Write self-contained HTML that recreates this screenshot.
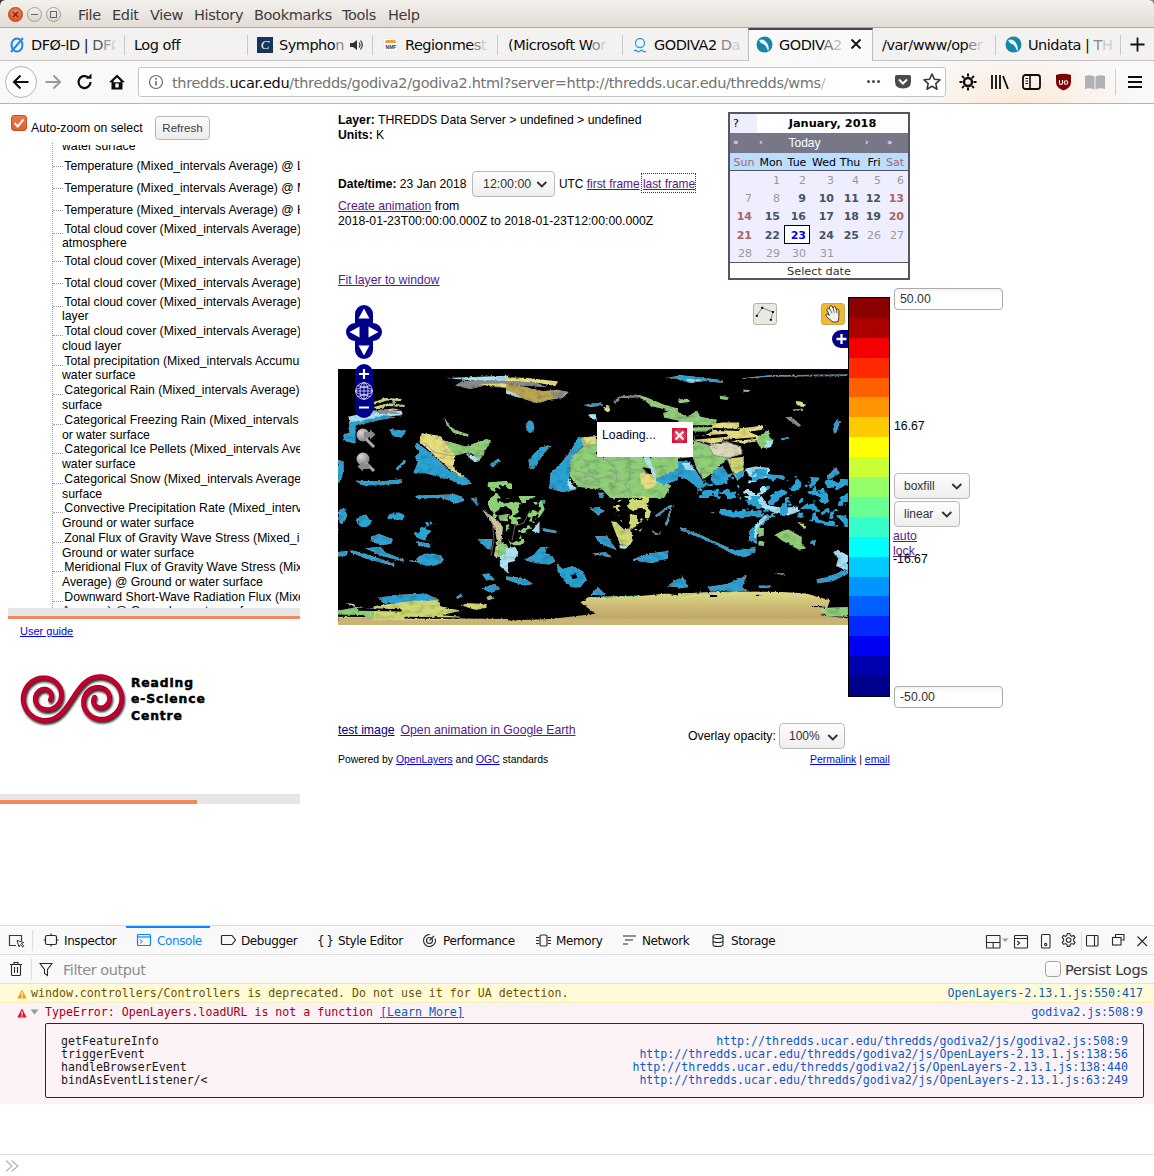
<!DOCTYPE html>
<html><head><meta charset="utf-8"><title>GODIVA2</title>
<style>
*{box-sizing:border-box;margin:0;padding:0}
html,body{width:1154px;height:1176px;overflow:hidden;background:#fff}
body{position:relative;font-family:"Liberation Sans",sans-serif;font-size:12px;color:#000}
.abs{position:absolute}
a{color:#551a8b;text-decoration:underline}
a.b{color:#0000ee}
/* chrome */
#titlebar{left:0;top:0;width:1154px;height:28px;background:linear-gradient(#f3f1ed,#e3dcd5);border-bottom:1px solid #aca69f}
#tabbar{left:0;top:28px;width:1154px;height:33px;background:#f4f2f0}
#navbar{left:0;top:61px;width:1154px;height:43px;background:#f9f9fa;border-bottom:1px solid #b4b4b4}
.ui{font-family:"DejaVu Sans","Liberation Sans",sans-serif}
.menu{top:7px;font-size:14.5px;color:#3c3c3c;letter-spacing:-0.35px;white-space:nowrap}
.tab{top:28px;height:32px;font-size:14.5px;color:#0c0c0d;white-space:nowrap;letter-spacing:-0.5px;line-height:34px;overflow:hidden}
.tsep{top:35px;width:1px;height:20px;background:#c9c9c9}
#urlbar{left:138px;top:67px;width:808px;height:30px;background:#fff;border:1px solid #c4c4c4;border-radius:3px}
/* page */
.t{white-space:nowrap;line-height:14px}
.row{left:62px;width:238px;overflow:hidden;white-space:nowrap;line-height:14px;font-size:12.260px}
select,.sel{font-family:"Liberation Sans",sans-serif}
.sel{border:1px solid #b9b9b9;border-radius:4px;background:linear-gradient(#fdfdfd,#eeeeee);color:#333;font-size:12px;line-height:24px;padding-left:9px;white-space:nowrap}
.inp{border:1px solid #aaa;border-radius:4px;background:linear-gradient(#f4f4f4,#fff 6px);color:#333;font-size:12.300px;line-height:21px;padding-left:5px}
.mono{font-family:"DejaVu Sans Mono","Liberation Mono",monospace;font-size:11.6px;white-space:nowrap;line-height:13px}
</style></head><body>
<div class="abs" id="titlebar"></div>
<div class="abs" style="left:0;top:0;width:5px;height:5px;background:radial-gradient(circle at 100% 100%,rgba(60,59,55,0) 4.300px,#3c3b37 5.200px)"></div>
<div class="abs" style="left:1149px;top:0;width:5px;height:5px;background:radial-gradient(circle at 0 100%,rgba(140,138,134,0) 4.300px,#8c8a86 5.200px)"></div>
<div class="abs" style="left:8px;top:7px;width:15px;height:15px;border-radius:50%;background:radial-gradient(circle at 50% 35%,#f58a66,#e9541f 70%);border:1px solid #b8421a"></div>
<svg class="abs" style="left:8px;top:7px" width="15" height="15"><path d="M5 5l5 5M10 5l-5 5" stroke="#5a2a18" stroke-width="1.3" fill="none"/></svg>
<div class="abs" style="left:27px;top:7px;width:15px;height:15px;border-radius:50%;background:linear-gradient(#f4f2ef,#d9d5cf);border:1px solid #a29c94"></div>
<div class="abs" style="left:31px;top:14px;width:7px;height:1px;background:#666"></div>
<div class="abs" style="left:46px;top:7px;width:15px;height:15px;border-radius:50%;background:linear-gradient(#f4f2ef,#d9d5cf);border:1px solid #a29c94"></div>
<div class="abs" style="left:50px;top:11px;width:7px;height:7px;border:1px solid #666"></div>
<div class="abs ui menu" style="left:78px">File</div>
<div class="abs ui menu" style="left:112px">Edit</div>
<div class="abs ui menu" style="left:150px">View</div>
<div class="abs ui menu" style="left:194px">History</div>
<div class="abs ui menu" style="left:254px">Bookmarks</div>
<div class="abs ui menu" style="left:342px">Tools</div>
<div class="abs ui menu" style="left:388px">Help</div>

<div class="abs" id="tabbar"></div>
<div class="abs" style="left:0;top:60px;width:1154px;height:1px;background:#c2c2c2"></div>
<!-- active tab -->
<div class="abs" style="left:748px;top:28px;width:125px;height:34px;background:#f9f9fa;border-left:1px solid #bdbdbd;border-right:1px solid #bdbdbd;border-top:2px solid #45454a"></div>
<!-- tabs -->
<svg class="abs" style="left:8px;top:36px" width="18" height="18"><ellipse cx="9" cy="9" rx="5.5" ry="6.5" fill="none" stroke="#1e88e5" stroke-width="2"/><path d="M3 16L15 2" stroke="#1e88e5" stroke-width="2"/></svg>
<div class="abs ui tab" style="left:31px;width:84px">DFØ-ID | <span style="color:#555">D</span><span style="color:#999">F</span><span style="color:#d0d0d0">Ø</span></div>
<div class="abs tsep" style="left:124px"></div>
<div class="abs ui tab" style="left:134px;width:90px">Log off</div>
<div class="abs tsep" style="left:247px"></div>
<div class="abs" style="left:257px;top:37px;width:16px;height:16px;background:#15355c;color:#fff;font:italic 13px/16px 'Liberation Serif',serif;text-align:center">C</div>
<div class="abs ui tab" style="left:279px;width:66px">Sympho<span style="color:#888">n</span><span style="color:#ccc">i</span></div>
<svg class="abs" style="left:348px;top:37px" width="16" height="16"><path d="M2 6h3l4-3v10l-4-3H2z" fill="#333"/><path d="M11 5.5q2 2.500 0 5M12.500 3.500q3.500 4.500 0 9" stroke="#333" stroke-width="1.200" fill="none"/></svg>
<div class="abs tsep" style="left:372px"></div>
<div class="abs" style="left:383px;top:38px;width:15px;height:14px;background:#fff;border:1px solid #eee"></div>
<div class="abs" style="left:385px;top:40px;width:11px;height:3px;background:#f0a040;border-radius:2px 2px 0 0"></div>
<div class="abs" style="left:384px;top:44px;width:14px;font:bold 5px/6px 'Liberation Sans',sans-serif;color:#333;text-align:center">NMF</div>
<div class="abs ui tab" style="left:405px;width:84px">Regionme<span style="color:#888">s</span><span style="color:#ccc">t</span></div>
<div class="abs tsep" style="left:497px"></div>
<div class="abs ui tab" style="left:508px;width:106px">(Microsoft W<span style="color:#888">o</span><span style="color:#ccc">r</span></div>
<div class="abs tsep" style="left:622px"></div>
<svg class="abs" style="left:632px;top:36px" width="16" height="18"><circle cx="8" cy="7" r="4.500" fill="none" stroke="#29a3d8" stroke-width="1.300"/><path d="M2 15q1.500-1.500 3 0t3 0 3 0 3 0" fill="none" stroke="#29a3d8" stroke-width="1.200"/></svg>
<div class="abs ui tab" style="left:654px;width:86px">GODIVA2 <span style="color:#888">D</span><span style="color:#ccc">a</span></div>
<svg class="abs" style="left:756px;top:36px" width="17" height="17"><circle cx="8.500" cy="8.500" r="8" fill="#1487a8"/><path d="M3 4q5-2 8 3t1 8q-2-6-5-7t-4-4z" fill="#e8f4f8"/></svg>
<div class="abs ui tab" style="left:779px;width:64px">GODIV<span style="color:#777">A</span><span style="color:#bbb">2</span></div>
<svg class="abs" style="left:850px;top:38px" width="12" height="12"><path d="M1.500 1.500l9 9M10.500 1.500l-9 9" stroke="#111" stroke-width="1.800" fill="none"/></svg>
<div class="abs ui tab" style="left:882px;width:104px">/var/www/op<span style="color:#888">e</span><span style="color:#ccc">r</span></div>
<div class="abs tsep" style="left:995px"></div>
<svg class="abs" style="left:1005px;top:36px" width="17" height="17"><circle cx="8.500" cy="8.500" r="8" fill="#1487a8"/><path d="M3 4q5-2 8 3t1 8q-2-6-5-7t-4-4z" fill="#e8f4f8"/></svg>
<div class="abs ui tab" style="left:1028px;width:84px">Unidata | <span style="color:#888">T</span><span style="color:#ccc">H</span></div>
<div class="abs tsep" style="left:1120px"></div>
<svg class="abs" style="left:1130px;top:37px" width="15" height="15"><path d="M7.500 0.500v14M0.500 7.500h14" stroke="#111" stroke-width="1.800"/></svg>

<div class="abs" id="navbar"></div>
<div class="abs" style="left:880px;top:61px;width:274px;height:42px;background:radial-gradient(ellipse 120px 60px at 140px 44px,rgba(252,228,204,0.75),rgba(252,228,204,0) 100%)"></div>
<div class="abs" style="left:5px;top:66px;width:32px;height:32px;border-radius:50%;background:#fdfdfd;border:1px solid #b6b6b6"></div>
<svg class="abs" style="left:12px;top:73px" width="18" height="18"><path d="M16.500 9H2.500M8.500 2.500L2 9l6.500 6.500" stroke="#0c0c0d" stroke-width="2" fill="none"/></svg>
<svg class="abs" style="left:44px;top:73px" width="18" height="18"><path d="M1.500 9H15.500M9.500 2.500L16 9l-6.500 6.500" stroke="#9a9a9a" stroke-width="2" fill="none"/></svg>
<svg class="abs" style="left:76px;top:73px" width="18" height="18"><path d="M14.500 9a6 6 0 1 1-2.200-4.600" stroke="#0c0c0d" stroke-width="2.200" fill="none"/><path d="M10 5.800h5.500V0.500z" fill="#0c0c0d"/></svg>
<svg class="abs" style="left:108px;top:73px" width="18" height="18"><path d="M9 1.500L1 9.200h2.500V16.500h11V9.200H17z" fill="#0c0c0d"/><rect x="7.300" y="10.500" width="3.400" height="4" fill="#f9f9fa"/><path d="M9 4.500l-3.500 3.500v1.200h7V8z" fill="#f9f9fa"/></svg>
<div class="abs" id="urlbar"></div>
<svg class="abs" style="left:148px;top:74px" width="16" height="16"><circle cx="8" cy="8" r="6.500" fill="none" stroke="#6a6a6a" stroke-width="1.200"/><path d="M8 7v4.500" stroke="#6a6a6a" stroke-width="1.600"/><circle cx="8" cy="4.800" r="1" fill="#6a6a6a"/></svg>
<div class="abs ui" style="left:172px;top:74px;width:690px;height:20px;overflow:hidden;white-space:nowrap;font-size:14.500px;line-height:18px;letter-spacing:-0.33px;color:#737373">thredds.<span style="color:#0c0c0d">ucar.edu</span>/thredds/godiva2/godiva2.html?server=http://thredds.ucar.edu/thredds/wms<span style="color:#bbb">/</span></div>
<div class="abs" style="left:867px;top:80px;width:3px;height:3px;border-radius:50%;background:#4a4a4a;box-shadow:5px 0 #4a4a4a,10px 0 #4a4a4a"></div>
<svg class="abs" style="left:894px;top:74px" width="18" height="16"><path d="M1 2.500q0-1.500 1.500-1.500h13q1.500 0 1.500 1.500v5q0 7-8 7t-8-7z" fill="#4a4a4f"/><path d="M5 5.500l4 4 4-4" stroke="#fff" stroke-width="2" fill="none"/></svg>
<svg class="abs" style="left:922px;top:72px" width="20" height="20"><path d="M10 2l2.400 5.200 5.600.6-4.200 3.800 1.200 5.600L10 14.300 5 17.200l1.200-5.600L2 7.800l5.600-.6z" fill="none" stroke="#3a3a3a" stroke-width="1.600" stroke-linejoin="round"/></svg>
<svg class="abs" style="left:958px;top:72px" width="20" height="20"><circle cx="10" cy="10" r="4" fill="none" stroke="#0c0c0d" stroke-width="2.400"/><path d="M10 1.500v3M10 15.500v3M1.500 10h3M15.500 10h3M4 4l2.100 2.100M13.900 13.900L16 16M4 16l2.100-2.100M13.900 6.100L16 4" stroke="#0c0c0d" stroke-width="2"/></svg>
<svg class="abs" style="left:990px;top:73px" width="20" height="18"><path d="M2 2v14M6 2v14M10 2v14M13 3l5 13" stroke="#0c0c0d" stroke-width="1.800" fill="none"/></svg>
<svg class="abs" style="left:1022px;top:74px" width="19" height="16"><rect x="1" y="1" width="17" height="14" rx="2.500" fill="none" stroke="#0c0c0d" stroke-width="1.800"/><path d="M8 1v14" stroke="#0c0c0d" stroke-width="1.600"/><path d="M3.500 4.500h2.500M3.500 7h2.500M3.500 9.500h2.500" stroke="#0c0c0d" stroke-width="1"/></svg>
<svg class="abs" style="left:1055px;top:73px" width="17" height="18"><path d="M1 2q7.500-2.500 15 0v7q0 6-7.500 8.500Q1 15 1 9z" fill="#800000"/><path d="M4.500 7v3q0 1.500 1.500 1.500t1.500-1.500V7" stroke="#fff" stroke-width="1.100" fill="none"/><circle cx="11" cy="9.500" r="1.800" stroke="#fff" stroke-width="1.100" fill="none"/></svg>
<svg class="abs" style="left:1084px;top:74px" width="22" height="17"><path d="M1 2q5-1.500 9.500.5v13q-4.500-2-9.500-.5zM21 2q-5-1.500-9.500.5v13q4.500-2 9.500-.5z" fill="#b1b1b3"/></svg>
<div class="abs" style="left:1115px;top:69px;width:1px;height:26px;background:#d0d0d0"></div>
<svg class="abs" style="left:1127px;top:74px" width="16" height="16"><path d="M1 3h14M1 8h14M1 13h14" stroke="#0c0c0d" stroke-width="2"/></svg>
<div class="abs" style="left:11px;top:115px;width:16px;height:16px;border-radius:3px;background:linear-gradient(#f07746,#e3602b);border:1px solid #c9501f"></div>
<svg class="abs" style="left:11px;top:115px" width="16" height="16"><path d="M3.500 8l3.200 3.400 5.800-7" stroke="#fff" stroke-width="2" fill="none"/></svg>
<div class="abs t" style="left:31px;top:121px;font-size:12.250px">Auto-zoom on select</div>
<div class="abs" style="left:155px;top:116px;width:55px;height:24px;border:1px solid #b5b5b5;border-radius:4px;background:linear-gradient(#fcfcfc,#ececec);font-size:11.500px;color:#3c3c3c;text-align:center;line-height:22px">Refresh</div>
<!-- tree -->
<div class="abs" style="left:8px;top:143px;width:292px;height:465px;overflow:hidden">
 <div class="abs" style="left:44px;top:0;width:0;height:465px;border-left:1px dotted #999"></div>
</div>
<div class="abs" id="tree" style="left:0;top:143px;width:300px;height:465px;overflow:hidden;clip-path:inset(2px 0 0 0)">
<div class="abs row" style="top:-4px">water surface</div>
<div class="abs row" style="top:16px;text-indent:2.300px">Temperature (Mixed_intervals Average) @ Low cloud layer</div>
<div class="abs" style="left:53px;top:23px;width:10px;height:0;border-top:1px dotted #999"></div>
<div class="abs row" style="top:38px;text-indent:2.300px">Temperature (Mixed_intervals Average) @ Middle cloud layer</div>
<div class="abs" style="left:53px;top:45px;width:10px;height:0;border-top:1px dotted #999"></div>
<div class="abs row" style="top:60px;text-indent:2.300px">Temperature (Mixed_intervals Average) @ High cloud layer</div>
<div class="abs" style="left:53px;top:67px;width:10px;height:0;border-top:1px dotted #999"></div>
<div class="abs row" style="top:79px;text-indent:2.300px">Total cloud cover (Mixed_intervals Average) @ Entire</div>
<div class="abs" style="left:53px;top:90px;width:10px;height:0;border-top:1px dotted #999"></div>
<div class="abs row" style="top:93px;background:#fff">atmosphere</div>
<div class="abs row" style="top:111px;text-indent:2.300px">Total cloud cover (Mixed_intervals Average) @ Low cloud layer</div>
<div class="abs" style="left:53px;top:118px;width:10px;height:0;border-top:1px dotted #999"></div>
<div class="abs row" style="top:133px;text-indent:2.300px">Total cloud cover (Mixed_intervals Average) @ Middle cloud layer</div>
<div class="abs" style="left:53px;top:140px;width:10px;height:0;border-top:1px dotted #999"></div>
<div class="abs row" style="top:152px;text-indent:2.300px">Total cloud cover (Mixed_intervals Average) @ High cloud</div>
<div class="abs" style="left:53px;top:163px;width:10px;height:0;border-top:1px dotted #999"></div>
<div class="abs row" style="top:166px;background:#fff">layer</div>
<div class="abs row" style="top:181px;text-indent:2.300px">Total cloud cover (Mixed_intervals Average) @ Convective</div>
<div class="abs" style="left:53px;top:192px;width:10px;height:0;border-top:1px dotted #999"></div>
<div class="abs row" style="top:196px;background:#fff">cloud layer</div>
<div class="abs row" style="top:211px;text-indent:2.300px">Total precipitation (Mixed_intervals Accumulation) @ Ground or</div>
<div class="abs" style="left:53px;top:222px;width:10px;height:0;border-top:1px dotted #999"></div>
<div class="abs row" style="top:225px;background:#fff">water surface</div>
<div class="abs row" style="top:240px;text-indent:2.300px">Categorical Rain (Mixed_intervals Average) @ Ground or water</div>
<div class="abs" style="left:53px;top:251px;width:10px;height:0;border-top:1px dotted #999"></div>
<div class="abs row" style="top:255px;background:#fff">surface</div>
<div class="abs row" style="top:270px;text-indent:2.300px">Categorical Freezing Rain (Mixed_intervals Average) @ Ground</div>
<div class="abs" style="left:53px;top:281px;width:10px;height:0;border-top:1px dotted #999"></div>
<div class="abs row" style="top:285px;background:#fff">or water surface</div>
<div class="abs row" style="top:299px;text-indent:2.300px">Categorical Ice Pellets (Mixed_intervals Average) @ Ground or</div>
<div class="abs" style="left:53px;top:310px;width:10px;height:0;border-top:1px dotted #999"></div>
<div class="abs row" style="top:314px;background:#fff">water surface</div>
<div class="abs row" style="top:329px;text-indent:2.300px">Categorical Snow (Mixed_intervals Average) @ Ground or water</div>
<div class="abs" style="left:53px;top:340px;width:10px;height:0;border-top:1px dotted #999"></div>
<div class="abs row" style="top:344px;background:#fff">surface</div>
<div class="abs row" style="top:358px;text-indent:2.300px">Convective Precipitation Rate (Mixed_intervals Average) @</div>
<div class="abs" style="left:53px;top:369px;width:10px;height:0;border-top:1px dotted #999"></div>
<div class="abs row" style="top:373px;background:#fff">Ground or water surface</div>
<div class="abs row" style="top:388px;text-indent:2.300px">Zonal Flux of Gravity Wave Stress (Mixed_intervals Average) @</div>
<div class="abs" style="left:53px;top:399px;width:10px;height:0;border-top:1px dotted #999"></div>
<div class="abs row" style="top:403px;background:#fff">Ground or water surface</div>
<div class="abs row" style="top:417px;text-indent:2.300px">Meridional Flux of Gravity Wave Stress (Mixed_intervals</div>
<div class="abs" style="left:53px;top:428px;width:10px;height:0;border-top:1px dotted #999"></div>
<div class="abs row" style="top:432px;background:#fff">Average) @ Ground or water surface</div>
<div class="abs row" style="top:447px;text-indent:2.300px">Downward Short-Wave Radiation Flux (Mixed_intervals</div>
<div class="abs" style="left:53px;top:458px;width:10px;height:0;border-top:1px dotted #999"></div>
<div class="abs row" style="top:461px;background:#fff">Average) @ Ground or water surface</div>
</div>
<div class="abs" style="left:8px;top:608px;width:292px;height:8px;background:#e6e6e6"></div>
<div class="abs" style="left:8px;top:615.500px;width:292px;height:3.300px;background:#f08a5d"></div>
<a class="abs t b" style="left:20px;top:624px;font-size:11px">User guide</a>
<!-- logo -->
<svg class="abs" style="left:14px;top:666px" width="120" height="66" viewBox="14 666 120 66">
<defs><filter id="sh" x="-10%" y="-10%" width="130%" height="130%"><feGaussianBlur in="SourceAlpha" stdDeviation="0.9"/><feOffset dx="1.3" dy="1.6"/><feComponentTransfer><feFuncA type="linear" slope="0.85"/></feComponentTransfer><feMerge><feMergeNode/><feMergeNode in="SourceGraphic"/></feMerge></filter></defs>
<g filter="url(#sh)" fill="none" stroke-linecap="round" stroke-linejoin="round"><path d="M50.3 699.8 L50.6 699.4 L50.8 699.0 L51.0 698.5 L51.2 698.0 L51.4 697.5 L51.5 696.9 L51.5 696.3 L51.5 695.7 L51.5 695.0 L51.4 694.4 L51.1 693.8 L50.9 693.1 L50.5 692.5 L50.1 691.9 L49.6 691.4 L49.1 690.8 L48.5 690.4 L47.8 690.0 L47.1 689.6 L46.3 689.4 L45.5 689.2 L44.7 689.1 L43.9 689.2 L43.0 689.3 L42.2 689.5 L41.4 689.7 L40.6 690.1 L39.9 690.5 L39.2 691.0 L38.6 691.6 L37.9 692.2 L37.4 692.8 L36.9 693.5 L36.4 694.3 L36.1 695.1 L35.8 695.9 L35.5 696.7 L35.4 697.6 L35.3 698.5 L35.3 699.4 L35.4 700.3 L35.5 701.2 L35.8 702.0 L36.1 702.9 L36.5 703.7 L36.9 704.5 L37.4 705.3 L38.0 706.0 L38.7 706.6 L39.4 707.2 L40.2 707.7 L41.0 708.2 L41.8 708.6 L42.7 708.9 L43.6 709.2 L44.5 709.4 L45.5 709.6 L46.5 709.7 L47.5 709.7 L48.5 709.7 L49.5 709.5 L50.5 709.3 L51.6 709.0 L52.6 708.6 L53.6 708.2 L54.6 707.6 L55.5 706.9 L56.5 706.2 L57.3 705.3 L58.1 704.4 L58.9 703.4 L59.6 702.3 L60.1 701.1 L60.6 699.8 L61.0 698.5 L61.3 697.1 L61.4 695.7 L61.4 694.2 L61.3 692.7 L61.1 691.2 L60.7 689.7 L60.1 688.3 L59.4 686.8 L58.5 685.5 L57.5 684.1 L56.4 682.9 L55.1 681.8 L53.8 680.8 L52.3 679.9 L50.7 679.2 L49.0 678.6 L47.3 678.2 L45.5 677.9 L43.7 677.8 L41.9 677.9 L40.0 678.1 L38.2 678.5 L36.5 679.1 L34.8 679.9 L33.1 680.8 L31.6 681.9 L30.1 683.1 L28.8 684.4 L27.5 685.9 L26.4 687.5 L25.5 689.2 L24.7 690.9 L24.1 692.8 L23.6 694.6 L23.3 696.6 L23.2 698.5 L23.3 700.4 L23.5 702.4 L24.0 704.3 L24.6 706.1 L25.4 707.9 L26.3 709.6 L27.3 711.2 L28.5 712.7 L29.9 714.1 L31.3 715.4 L32.9 716.6 L34.5 717.6 L36.2 718.4 L38.0 719.1 L39.8 719.7 L41.7 720.1 L43.6 720.3 L45.5 720.4 C71.5 720.4 73.5 676.6 99.5 676.6 L101.4 676.7 L103.3 676.9 L105.2 677.3 L107.0 677.9 L108.8 678.6 L110.5 679.4 L112.1 680.4 L113.7 681.6 L115.1 682.9 L116.5 684.3 L117.7 685.8 L118.7 687.4 L119.6 689.1 L120.4 690.9 L121.0 692.7 L121.5 694.6 L121.7 696.6 L121.8 698.5 L121.7 700.4 L121.4 702.4 L120.9 704.2 L120.3 706.1 L119.5 707.8 L118.6 709.5 L117.5 711.1 L116.2 712.6 L114.9 713.9 L113.4 715.1 L111.9 716.2 L110.2 717.1 L108.5 717.9 L106.8 718.5 L105.0 718.9 L103.1 719.1 L101.3 719.2 L99.5 719.1 L97.7 718.8 L96.0 718.4 L94.3 717.8 L92.7 717.1 L91.2 716.2 L89.9 715.2 L88.6 714.1 L87.5 712.9 L86.5 711.5 L85.6 710.2 L84.9 708.7 L84.3 707.3 L83.9 705.8 L83.7 704.3 L83.6 702.8 L83.6 701.3 L83.7 699.9 L84.0 698.5 L84.4 697.2 L84.9 695.9 L85.4 694.7 L86.1 693.6 L86.9 692.6 L87.7 691.7 L88.5 690.8 L89.5 690.1 L90.4 689.4 L91.4 688.8 L92.4 688.4 L93.4 688.0 L94.5 687.7 L95.5 687.5 L96.5 687.3 L97.5 687.3 L98.5 687.3 L99.5 687.4 L100.5 687.6 L101.4 687.8 L102.3 688.1 L103.2 688.4 L104.0 688.8 L104.8 689.3 L105.6 689.8 L106.3 690.4 L107.0 691.0 L107.6 691.7 L108.1 692.5 L108.5 693.3 L108.9 694.1 L109.2 695.0 L109.5 695.8 L109.6 696.7 L109.7 697.6 L109.7 698.5 L109.6 699.4 L109.5 700.3 L109.2 701.1 L108.9 701.9 L108.6 702.7 L108.1 703.5 L107.6 704.2 L107.1 704.8 L106.4 705.4 L105.8 706.0 L105.1 706.5 L104.4 706.9 L103.6 707.3 L102.8 707.5 L102.0 707.7 L101.1 707.8 L100.3 707.9 L99.5 707.8 L98.7 707.6 L97.9 707.4 L97.2 707.0 L96.5 706.6 L95.9 706.2 L95.4 705.6 L94.9 705.1 L94.5 704.5 L94.1 703.9 L93.9 703.2 L93.6 702.6 L93.5 702.0 L93.5 701.3 L93.5 700.7 L93.5 700.1 L93.6 699.5 L93.8 699.0 L94.0 698.5 L94.2 698.0 L94.4 697.6 L94.7 697.2" stroke="#a00026" stroke-width="4.8"/><path d="M50.3 699.8 L50.6 699.4 L50.8 699.0 L51.0 698.5 L51.2 698.0 L51.4 697.5 L51.5 696.9 L51.5 696.3 L51.5 695.7 L51.5 695.0 L51.4 694.4 L51.1 693.8 L50.9 693.1 L50.5 692.5 L50.1 691.9 L49.6 691.4 L49.1 690.8 L48.5 690.4 L47.8 690.0 L47.1 689.6 L46.3 689.4 L45.5 689.2 L44.7 689.1 L43.9 689.2 L43.0 689.3 L42.2 689.5 L41.4 689.7 L40.6 690.1 L39.9 690.5 L39.2 691.0 L38.6 691.6 L37.9 692.2 L37.4 692.8 L36.9 693.5 L36.4 694.3 L36.1 695.1 L35.8 695.9 L35.5 696.7 L35.4 697.6 L35.3 698.5 L35.3 699.4 L35.4 700.3 L35.5 701.2 L35.8 702.0 L36.1 702.9 L36.5 703.7 L36.9 704.5 L37.4 705.3 L38.0 706.0 L38.7 706.6 L39.4 707.2 L40.2 707.7 L41.0 708.2 L41.8 708.6 L42.7 708.9 L43.6 709.2 L44.5 709.4 L45.5 709.6 L46.5 709.7 L47.5 709.7 L48.5 709.7 L49.5 709.5 L50.5 709.3 L51.6 709.0 L52.6 708.6 L53.6 708.2 L54.6 707.6 L55.5 706.9 L56.5 706.2 L57.3 705.3 L58.1 704.4 L58.9 703.4 L59.6 702.3 L60.1 701.1 L60.6 699.8 L61.0 698.5 L61.3 697.1 L61.4 695.7 L61.4 694.2 L61.3 692.7 L61.1 691.2 L60.7 689.7 L60.1 688.3 L59.4 686.8 L58.5 685.5 L57.5 684.1 L56.4 682.9 L55.1 681.8 L53.8 680.8 L52.3 679.9 L50.7 679.2 L49.0 678.6 L47.3 678.2 L45.5 677.9 L43.7 677.8 L41.9 677.9 L40.0 678.1 L38.2 678.5 L36.5 679.1 L34.8 679.9 L33.1 680.8 L31.6 681.9 L30.1 683.1 L28.8 684.4 L27.5 685.9 L26.4 687.5 L25.5 689.2 L24.7 690.9 L24.1 692.8 L23.6 694.6 L23.3 696.6 L23.2 698.5 L23.3 700.4 L23.5 702.4 L24.0 704.3 L24.6 706.1 L25.4 707.9 L26.3 709.6 L27.3 711.2 L28.5 712.7 L29.9 714.1 L31.3 715.4 L32.9 716.6 L34.5 717.6 L36.2 718.4 L38.0 719.1 L39.8 719.7 L41.7 720.1 L43.6 720.3 L45.5 720.4 C71.5 720.4 73.5 676.6 99.5 676.6 L101.4 676.7 L103.3 676.9 L105.2 677.3 L107.0 677.9 L108.8 678.6 L110.5 679.4 L112.1 680.4 L113.7 681.6 L115.1 682.9 L116.5 684.3 L117.7 685.8 L118.7 687.4 L119.6 689.1 L120.4 690.9 L121.0 692.7 L121.5 694.6 L121.7 696.6 L121.8 698.5 L121.7 700.4 L121.4 702.4 L120.9 704.2 L120.3 706.1 L119.5 707.8 L118.6 709.5 L117.5 711.1 L116.2 712.6 L114.9 713.9 L113.4 715.1 L111.9 716.2 L110.2 717.1 L108.5 717.9 L106.8 718.5 L105.0 718.9 L103.1 719.1 L101.3 719.2 L99.5 719.1 L97.7 718.8 L96.0 718.4 L94.3 717.8 L92.7 717.1 L91.2 716.2 L89.9 715.2 L88.6 714.1 L87.5 712.9 L86.5 711.5 L85.6 710.2 L84.9 708.7 L84.3 707.3 L83.9 705.8 L83.7 704.3 L83.6 702.8 L83.6 701.3 L83.7 699.9 L84.0 698.5 L84.4 697.2 L84.9 695.9 L85.4 694.7 L86.1 693.6 L86.9 692.6 L87.7 691.7 L88.5 690.8 L89.5 690.1 L90.4 689.4 L91.4 688.8 L92.4 688.4 L93.4 688.0 L94.5 687.7 L95.5 687.5 L96.5 687.3 L97.5 687.3 L98.5 687.3 L99.5 687.4 L100.5 687.6 L101.4 687.8 L102.3 688.1 L103.2 688.4 L104.0 688.8 L104.8 689.3 L105.6 689.8 L106.3 690.4 L107.0 691.0 L107.6 691.7 L108.1 692.5 L108.5 693.3 L108.9 694.1 L109.2 695.0 L109.5 695.8 L109.6 696.7 L109.7 697.6 L109.7 698.5 L109.6 699.4 L109.5 700.3 L109.2 701.1 L108.9 701.9 L108.6 702.7 L108.1 703.5 L107.6 704.2 L107.1 704.8 L106.4 705.4 L105.8 706.0 L105.1 706.5 L104.4 706.9 L103.6 707.3 L102.8 707.5 L102.0 707.7 L101.1 707.8 L100.3 707.9 L99.5 707.8 L98.7 707.6 L97.9 707.4 L97.2 707.0 L96.5 706.6 L95.9 706.2 L95.4 705.6 L94.9 705.1 L94.5 704.5 L94.1 703.9 L93.9 703.2 L93.6 702.6 L93.5 702.0 L93.5 701.3 L93.5 700.7 L93.5 700.1 L93.6 699.5 L93.8 699.0 L94.0 698.5 L94.2 698.0 L94.4 697.6 L94.7 697.2" stroke="#c4002f" stroke-width="3.2"/></g></svg>
<div class="abs t" style="left:131px;top:675px;font-family:'DejaVu Sans',sans-serif;font-size:12.300px;font-weight:bold;line-height:16.400px;letter-spacing:0.900px;-webkit-text-stroke:0.500px #000">Reading<br>e-Science<br>Centre</div>
<div class="abs" style="left:0;top:794px;width:300px;height:10px;background:#e6e6e6"></div>
<div class="abs" style="left:0;top:800.300px;width:197px;height:3.500px;background:#f08a5d"></div>
<div class="abs t" style="left:338px;top:113px;font-size:12.250px;line-height:15px"><b>Layer:</b> THREDDS Data Server &gt; undefined &gt; undefined<br><b>Units:</b> K</div>
<div class="abs t" style="left:338px;top:177px;font-size:12.100px"><b>Date/time:</b> 23 Jan 2018</div>
<div class="abs sel" style="left:472px;top:171px;width:83px;height:25.500px;font-size:12.400px;padding-left:10px">12:00:00</div>
<svg class="abs" style="left:536px;top:180px" width="12" height="9"><path d="M1.300 2l4.500 4.500L10.300 2" stroke="#333" stroke-width="1.900" fill="none"/></svg>
<div class="abs t" style="left:559px;top:177px;font-size:11.900px">UTC <a>first frame</a> <a>last frame</a></div>
<div class="abs t" style="left:338px;top:199px;font-size:12.250px;line-height:15px"><a>Create animation</a> from<br>2018-01-23T00:00:00.000Z to 2018-01-23T12:00:00.000Z</div>
<div class="abs" style="left:641px;top:173px;width:55px;height:20px;border:1px dotted #551a8b"></div>
<a class="abs t" style="left:338px;top:273px;font-size:12.250px">Fit layer to window</a>
<!-- bottom -->
<div class="abs t" style="left:338px;top:723px;font-size:12.250px"><a style="color:#00008b">test image</a><span style="display:inline-block;width:6px"></span><a>Open animation in Google Earth</a></div>
<div class="abs t" style="left:688px;top:729px;font-size:12.250px">Overlay opacity:</div>
<div class="abs sel" style="left:779px;top:723px;width:66px;height:25.500px">100%</div>
<svg class="abs" style="left:827px;top:733px" width="12" height="9"><path d="M1.300 2l4.500 4.500L10.300 2" stroke="#333" stroke-width="1.900" fill="none"/></svg>
<div class="abs t" style="left:338px;top:753px;font-size:10.430px">Powered by <a class="b">OpenLayers</a> and <a class="b">OGC</a> standards</div>
<div class="abs t" style="left:810px;top:753px;font-size:10.430px"><a class="b">Permalink</a> | <a class="b">email</a></div>
<!-- scale controls -->
<div class="abs inp" style="left:894px;top:288px;width:109px;height:22px">50.00</div>
<div class="abs t" style="left:894px;top:419px;font-size:12.250px">16.67</div>
<div class="abs sel" style="left:894px;top:473px;width:76px;height:26px">boxfill</div>
<svg class="abs" style="left:951px;top:482px" width="12" height="9"><path d="M1.300 2l4.500 4.500L10.300 2" stroke="#333" stroke-width="1.900" fill="none"/></svg>
<div class="abs sel" style="left:894px;top:501px;width:66px;height:26px">linear</div>
<svg class="abs" style="left:941px;top:510px" width="12" height="9"><path d="M1.300 2l4.500 4.500L10.300 2" stroke="#333" stroke-width="1.900" fill="none"/></svg>
<div class="abs t" style="left:893px;top:529px;font-size:12.250px;line-height:14.500px"><a>auto</a><br><a>lock</a></div>
<div class="abs t" style="left:893px;top:552px;font-size:12.250px">-16.67</div>
<div class="abs inp" style="left:894px;top:686px;width:109px;height:22px">-50.00</div>
<div class="abs" id="cal" style="left:728px;top:112px;width:182px;height:168px;border:2px solid #556;background:#eef;font-family:'DejaVu Sans',sans-serif;font-size:11px;color:#000">
<style>
#cal div{position:absolute;white-space:nowrap}
#cal .d{width:25px;text-align:right;height:18px;line-height:18px;color:#999;font-size:11px}
#cal .bd{font-weight:bold;color:#456}
#cal .we{color:#a66}
#cal .dn{top:40px;height:17px;line-height:18px;text-align:center;font-size:11px}
</style>
<div style="left:0;top:0;width:178px;height:19px;background:#fff"></div>
<div style="left:0;top:0;width:27px;height:19px;background:#eef;line-height:19px;padding-left:3px;font-size:11px">?</div>
<div style="left:27px;top:0;width:151px;height:19px;line-height:19px;text-align:center;font-weight:bold;font-size:11.35px">January, 2018</div>
<div style="left:0;top:19px;width:178px;height:20px;background:#778"></div>
<div style="left:3px;top:19px;color:#fff;font-size:9px;line-height:19px">«</div>
<div style="left:29px;top:19px;color:#fff;font-size:9px;line-height:19px">‹</div>
<div style="left:27px;top:19px;width:95px;text-align:center;color:#fff;font:12px/21px 'Liberation Sans',sans-serif">Today</div>
<div style="left:135px;top:19px;color:#fff;font-size:9px;line-height:19px">›</div>
<div style="left:157px;top:19px;color:#fff;font-size:9px;line-height:19px">»</div>
<div style="left:0;top:39px;width:178px;height:18px;background:#bdf;border-bottom:1px solid #556"></div>
<div class="dn we" style="left:0;width:28px">Sun</div>
<div class="dn" style="left:27px;width:28px">Mon</div>
<div class="dn" style="left:54px;width:26px">Tue</div>
<div class="dn" style="left:80px;width:28px">Wed</div>
<div class="dn" style="left:107px;width:26px">Thu</div>
<div class="dn" style="left:133px;width:22px">Fri</div>
<div class="dn we" style="left:153px;width:24px">Sat</div>
<div class="d" style="left:25px;top:58px">1</div>
<div class="d" style="left:51px;top:58px">2</div>
<div class="d" style="left:79px;top:58px">3</div>
<div class="d" style="left:104px;top:58px">4</div>
<div class="d" style="left:126px;top:58px">5</div>
<div class="d" style="left:149px;top:58px">6</div>
<div class="d" style="left:-3px;top:76px">7</div>
<div class="d" style="left:25px;top:76px">8</div>
<div class="d bd" style="left:51px;top:76px">9</div>
<div class="d bd" style="left:79px;top:76px">10</div>
<div class="d bd" style="left:104px;top:76px">11</div>
<div class="d bd" style="left:126px;top:76px">12</div>
<div class="d bd we" style="left:149px;top:76px">13</div>
<div class="d bd we" style="left:-3px;top:94px">14</div>
<div class="d bd" style="left:25px;top:94px">15</div>
<div class="d bd" style="left:51px;top:94px">16</div>
<div class="d bd" style="left:79px;top:94px">17</div>
<div class="d bd" style="left:104px;top:94px">18</div>
<div class="d bd" style="left:126px;top:94px">19</div>
<div class="d bd we" style="left:149px;top:94px">20</div>
<div class="d bd we" style="left:-3px;top:113px">21</div>
<div class="d bd" style="left:25px;top:113px">22</div>
<div style="left:54px;top:111px;width:26px;height:19px;background:#fff;border:1px solid #000"></div>
<div class="d bd" style="left:51px;top:113px;color:#00f">23</div>
<div class="d bd" style="left:79px;top:113px">24</div>
<div class="d bd" style="left:104px;top:113px">25</div>
<div class="d" style="left:126px;top:113px">26</div>
<div class="d" style="left:149px;top:113px">27</div>
<div class="d" style="left:-3px;top:131px">28</div>
<div class="d" style="left:25px;top:131px">29</div>
<div class="d" style="left:51px;top:131px">30</div>
<div class="d" style="left:79px;top:131px">31</div>
<div style="left:0;top:148px;width:178px;height:16px;background:#fff;border-top:1px solid #556;text-align:center;line-height:18px;font-size:11.3px;color:#333">Select date</div>
</div>
<svg class="abs" style="left:338px;top:369px" width="510" height="256" viewBox="338 369 510 256">
<defs>
<filter id="rag" x="0" y="0" width="100%" height="100%"><feTurbulence type="fractalNoise" baseFrequency="0.4" numOctaves="1" seed="3" result="n1"/><feDisplacementMap in="SourceGraphic" in2="n1" scale="3" xChannelSelector="R" yChannelSelector="G" result="d"/><feTurbulence type="fractalNoise" baseFrequency="0.12 0.2" numOctaves="3" seed="5" result="n2"/><feColorMatrix in="n2" type="matrix" values="0.9 0 0 0 0.5  0.9 0 0 0 0.5  0.9 0 0 0 0.5  0 0 0 0 1" result="g"/><feBlend in="d" in2="g" mode="multiply" result="m"/><feComposite in="m" in2="d" operator="in"/></filter>
<filter id="rag2" x="0" y="0" width="100%" height="100%"><feTurbulence type="fractalNoise" baseFrequency="0.4" numOctaves="1" seed="3" result="n1"/><feDisplacementMap in="SourceGraphic" in2="n1" scale="3" xChannelSelector="R" yChannelSelector="G"/></filter>
<filter id="spk" x="0" y="0" width="100%" height="100%"><feTurbulence type="fractalNoise" baseFrequency="0.1" numOctaves="3" seed="11" result="n"/><feColorMatrix in="n" type="matrix" values="0 0 0 0 0  0 0 0 0 0  0 0 0 0 0  24 0 0 0 -12.6" result="m"/><feComposite in="SourceGraphic" in2="m" operator="in"/></filter>
<linearGradient id="ant" gradientUnits="userSpaceOnUse" x1="0" y1="594" x2="0" y2="625"><stop offset="0" stop-color="#dcd685"/><stop offset="0.35" stop-color="#cdbd76"/><stop offset="0.75" stop-color="#bfa869"/><stop offset="1" stop-color="#d8c98b"/></linearGradient>
</defs>
<rect x="338" y="369" width="510" height="256" fill="#000"/>
<g filter="url(#rag2)">
<polygon points="338.2,616.7 508.0,619.0 508.0,625.1 338.2,625.1" fill="url(#ant)"/>
<polygon points="580.5,602.6 588.0,597.3 640.1,595.9 667.0,593.6 678.0,595.6 678.0,625.1 506.0,625.1 506.0,620.4 550.7,619.0 595.4,613.7" fill="url(#ant)"/>
<polygon points="678.0,593.6 707.8,592.6 737.6,591.4 782.3,592.1 806.2,593.6 830.0,600.3 827.0,609.3 821.1,615.2 847.9,618.2 847.9,625.1 678.0,625.1" fill="url(#ant)"/>
</g>
<g filter="url(#rag)">
<polygon points="348.7,416.7 373.3,410.7 401.6,410.7 401.6,415.2 380.7,416.7 365.8,422.6 349.4,424.1" fill="#a9e3f6"/>
<polygon points="349.4,422.6 365.8,419.7 385.2,415.2 395.6,417.4 380.7,419.7 355.4,425.6 355.4,443.5 343.5,440.5 343.5,434.6 349.4,433.1" fill="#2aa2d4"/>
<polygon points="373.3,402.5 385.2,398.0 401.6,399.1 401.6,401.0 386.7,400.6 374.7,404.5" fill="#cfd873"/>
<polygon points="374.0,407.0 388.2,403.3 404.6,405.0 404.6,407.0 388.2,405.9 375.5,409.5" fill="#cfd873"/>
<polygon points="380.7,410.7 392.6,408.5 400.1,409.5 392.6,410.7" fill="#cfd873"/>
<polygon points="392.6,401.0 394.9,401.0 394.9,405.5 392.6,405.5" fill="#8fcf78"/>
<polygon points="373.3,410.7 385.2,409.2 401.6,413.7 380.7,413.7" fill="#8a8a8a"/>
<polygon points="389.7,429.3 406.0,430.8 401.6,437.5 392.6,436.0" fill="#2aa2d4"/>
<polygon points="417.2,442.8 431.4,453.9 449.3,470.3 465.7,477.8 471.6,483.7 462.7,485.2 449.3,479.3 437.3,476.3 425.4,473.3 413.5,473.3 418.0,461.4 415.0,456.9 419.5,452.4 415.0,446.5" fill="#2aa2d4"/>
<polygon points="421.7,433.1 440.3,436.0 443.3,440.5 455.2,443.5 455.2,455.4 453.7,464.4 455.2,470.3 465.7,477.8 458.2,474.8 449.3,468.8 431.4,452.4 419.5,442.0" fill="#e6de7e"/>
<polygon points="443.3,440.5 455.2,443.5 465.7,446.5 486.5,439.0 491.0,440.5 479.1,461.4 476.1,455.4 468.6,452.4 455.2,455.4" fill="#8fcf78"/>
<polygon points="465.7,453.9 476.1,455.4 479.1,461.4 474.6,462.1" fill="#a9e3f6"/>
<polygon points="446.3,377.9 508.0,375.7 508.0,380.9 470.1,380.2" fill="#a9e3f6"/>
<polygon points="455.2,385.4 462.7,380.9 485.0,380.2 508.0,380.9 508.0,388.4 485.0,385.4 470.1,389.1" fill="#8a8a8a"/>
<polygon points="477.6,383.9 508.0,383.6 508.0,387.6 492.5,386.1" fill="#e6de7e"/>
<polygon points="444.0,416.7 449.3,425.6 455.2,430.1 468.6,434.6 467.9,436.8 453.7,433.1 447.0,425.6" fill="#8fcf78"/>
<polygon points="355.4,480.8 380.7,481.5 401.6,479.3 401.6,483.0 380.7,485.2 362.8,485.2" fill="#2aa2d4"/>
<polygon points="337.8,459.9 343.5,461.4 343.5,470.3 340.5,482.2 337.8,482.2" fill="#2aa2d4"/>
<polygon points="395.6,468.8 404.6,459.9 406.0,461.4 397.8,470.3" fill="#2aa2d4"/>
<polygon points="489.5,464.4 498.4,458.4 499.9,461.4 492.5,467.3" fill="#2aa2d4"/>
<polygon points="416.5,495.7 455.2,494.2 464.2,498.0 416.5,498.0" fill="#2aa2d4"/>
<polygon points="506.0,377.2 528.4,377.9 558.2,381.6 555.2,386.1 535.8,382.4 506.0,380.9" fill="#e6de7e"/>
<polygon points="506.0,380.9 535.8,382.4 546.2,386.9 520.9,385.4 506.0,383.9" fill="#8a8a8a"/>
<polygon points="506.0,383.9 525.4,386.9 543.3,391.3 556.7,389.8 568.6,392.1 562.6,398.0 550.7,399.5 537.3,403.3 520.9,398.0 506.0,391.3" fill="#b9a653"/>
<polygon points="550.7,392.1 565.6,391.3 562.6,398.0 552.2,398.0" fill="#8a8a8a"/>
<polygon points="506.0,389.8 514.9,393.6 520.9,398.0 514.9,396.6 506.0,393.6" fill="#a9e3f6"/>
<polygon points="583.5,405.0 601.4,402.5 602.9,405.5 589.5,407.0" fill="#2aa2d4"/>
<polygon points="588.0,414.4 595.4,413.7 596.9,420.4 590.9,418.2" fill="#a9e3f6"/>
<polygon points="534.0,426.6 533.3,430.2 531.3,432.5 528.8,432.5 526.9,430.2 526.1,426.6 526.9,422.9 528.8,420.7 531.3,420.7 533.3,422.9" fill="#2aa2d4"/>
<polygon points="528.4,459.9 540.3,447.2 550.7,445.7 543.3,453.9 534.3,468.8 529.8,468.8" fill="#2aa2d4"/>
<polygon points="579.0,436.0 583.5,445.0 573.1,455.4 570.1,470.3 568.6,482.2 576.0,489.7 562.6,491.9 549.2,488.2 550.7,473.3 562.6,461.4 571.6,449.5" fill="#2aa2d4"/>
<polygon points="568.6,476.3 571.6,485.2 577.5,488.2 570.1,489.7 567.1,483.7" fill="#a9e3f6"/>
<polygon points="580.5,437.5 596.9,436.0 596.9,456.9 678.0,456.9 678.0,468.8 655.0,479.3 671.4,485.2 664.0,498.0 637.1,498.0 610.3,498.0 602.9,489.7 577.5,486.7 570.1,476.3 570.1,462.9 573.1,455.4 583.5,446.5" fill="#8fcf78"/>
<polygon points="583.5,437.5 595.4,436.8 595.4,443.5 586.5,445.0" fill="#e6de7e"/>
<polygon points="640.1,473.3 655.0,470.3 656.5,485.2 646.1,489.7 641.6,483.7" fill="#e6de7e"/>
<polygon points="655.0,479.3 678.0,468.8 678.0,479.3 664.0,485.2" fill="#2aa2d4"/>
<polygon points="643.1,456.9 649.1,456.9 656.5,476.3 653.5,477.0" fill="#a9e3f6"/>
<polygon points="643.1,467.3 650.6,468.8 651.3,474.8 646.1,473.3" fill="#000"/>
<polygon points="613.3,401.8 619.3,396.6 640.1,395.1 655.0,403.3 653.5,404.7 640.1,397.3 620.8,398.0 614.8,403.3" fill="#8a8a8a"/>
<polygon points="637.1,395.1 646.1,397.3 664.0,404.7 678.0,408.5 678.0,420.4 664.0,417.4 663.2,412.9 669.9,410.7 652.1,406.2" fill="#8fcf78"/>
<polygon points="602.9,407.7 608.8,405.5 610.3,410.7 605.9,411.5" fill="#e6de7e"/>
<polygon points="665.5,377.9 678.0,376.1 678.0,378.7" fill="#2aa2d4"/>
<polygon points="598.4,492.7 604.4,492.7 602.9,498.0 599.1,498.0" fill="#2aa2d4"/>
<polygon points="678.0,374.9 692.9,376.4 722.7,380.2 722.7,383.1 704.8,380.9 689.9,383.1 678.0,379.4" fill="#2aa2d4"/>
<polygon points="685.5,378.7 701.8,379.7 691.4,383.1" fill="#a9e3f6"/>
<polygon points="742.1,378.2 770.4,375.2 847.9,374.6 847.9,376.1 770.4,376.4 743.6,379.1" fill="#2aa2d4"/>
<polygon points="678.0,399.5 688.4,398.8 689.9,401.8 679.5,403.3" fill="#8fcf78"/>
<polygon points="719.7,395.8 728.7,397.3 727.2,400.0 720.5,399.1" fill="#8fcf78"/>
<polygon points="743.6,389.8 750.3,390.1 748.0,392.1 743.6,391.6" fill="#8fcf78"/>
<polygon points="795.7,401.0 801.7,401.8 805.9,405.5 801.7,407.0 797.2,405.0" fill="#e6de7e"/>
<polygon points="792.8,409.2 803.2,409.5 802.9,410.7 793.1,410.4" fill="#e6de7e"/>
<polygon points="785.3,417.4 791.3,416.7 801.0,425.6 798.7,426.8" fill="#8a8a8a"/>
<polygon points="678.0,412.2 686.9,416.7 697.4,410.7 700.4,416.7 716.7,419.7 715.3,425.6 706.3,431.6 692.9,431.6 692.9,422.6 678.0,422.6" fill="#8fcf78"/>
<polygon points="712.3,424.1 722.7,422.6 739.1,422.6 739.1,428.6 764.4,425.6 761.5,430.1 748.0,431.6 758.5,436.0 761.5,440.5 743.6,443.5 727.2,440.5 712.3,443.5 694.4,440.5 712.3,431.6" fill="#e6de7e"/>
<polygon points="694.4,436.0 727.2,433.8 727.2,436.8 694.4,439.8" fill="#000"/>
<polygon points="758.5,436.0 768.9,430.1 768.9,436.0 773.4,440.5 770.4,447.2 761.5,448.7 757.0,442.0" fill="#8fcf78"/>
<polygon points="765.9,440.5 773.4,440.5 771.1,447.2 765.9,446.5" fill="#a9e3f6"/>
<polygon points="707.8,445.0 727.2,442.0 740.6,446.5 742.1,453.9 728.7,457.7 713.8,455.4" fill="#ddd8b8"/>
<polygon points="692.9,440.5 707.8,445.0 713.8,455.4 728.7,457.7 722.7,462.9 712.3,473.3 703.3,479.3 697.4,470.3 692.9,456.9 678.0,458.4 678.0,456.9 692.9,456.9" fill="#8fcf78"/>
<polygon points="727.2,458.4 743.6,456.9 743.6,470.3 737.6,480.8 731.7,470.3" fill="#cfd873"/>
<polygon points="678.0,461.4 689.9,461.4 697.4,473.3 703.3,482.2 701.8,491.2 686.9,479.3 678.0,476.3" fill="#2aa2d4"/>
<polygon points="681.0,462.9 689.9,462.9 694.4,470.3 686.9,470.3" fill="#a9e3f6"/>
<polygon points="713.8,470.3 722.7,465.9 727.2,473.3 727.2,483.7 715.3,485.2 710.8,479.3" fill="#2aa2d4"/>
<polygon points="745.1,468.8 755.5,466.6 770.4,468.1 767.4,477.8 755.5,479.3 749.5,476.3" fill="#a9e3f6"/>
<polygon points="755.5,468.8 767.4,468.8 765.9,476.3 757.0,477.0" fill="#2aa2d4"/>
<polygon points="780.8,439.0 788.3,436.8 789.0,438.3 782.3,440.2" fill="#2aa2d4"/>
<polygon points="833.0,425.6 837.5,418.9 840.1,421.9 836.0,433.1 833.7,432.3" fill="#2aa2d4"/>
<polygon points="827.0,476.3 836.0,467.3 839.7,473.3 828.5,480.0" fill="#2aa2d4"/>
<polygon points="713.8,427.8 740.6,429.3 740.6,431.1 713.8,430.1" fill="#000"/>
<polygon points="722.7,439.8 755.5,437.2 755.5,439.0 722.7,441.7" fill="#000"/>
<polygon points="681.0,425.6 712.3,424.9 712.3,427.1 681.0,427.8" fill="#000"/>
<polygon points="415.0,496.0 422.4,496.7 419.5,499.7" fill="#2aa2d4"/>
<polygon points="434.4,496.0 461.2,496.0 464.9,500.5 455.2,503.5 449.3,500.5" fill="#2aa2d4"/>
<polygon points="470.9,498.2 476.8,497.5 477.6,506.4" fill="#2aa2d4"/>
<polygon points="371.0,536.2 379.2,534.0 392.6,539.2 391.1,543.7 380.7,545.2 371.8,541.5" fill="#2aa2d4"/>
<polygon points="443.6,559.6 441.0,563.2 434.2,565.4 425.8,565.4 419.1,563.2 416.5,559.6 419.1,555.9 425.8,553.7 434.2,553.7 441.0,555.9" fill="#2aa2d4"/>
<polygon points="338.2,551.9 347.9,551.1 346.4,555.6 338.2,556.4" fill="#2aa2d4"/>
<polygon points="349.4,549.7 365.8,554.1 394.1,563.8 394.1,566.0 365.8,558.6 350.9,552.6" fill="#2aa2d4"/>
<polygon points="365.8,548.2 380.7,546.7 385.2,552.6 404.6,560.1 403.1,561.6 380.7,555.6" fill="#2aa2d4"/>
<polygon points="407.5,560.8 419.5,560.1 419.5,563.1" fill="#2aa2d4"/>
<polygon points="415.7,541.5 431.4,543.7 429.9,547.4 419.5,545.9" fill="#2aa2d4"/>
<polygon points="477.6,539.2 492.5,539.2 491.0,549.7 486.5,548.2" fill="#2aa2d4"/>
<polygon points="482.1,574.2 489.5,573.5 494.7,580.2 486.5,580.2" fill="#2aa2d4"/>
<polygon points="482.8,588.4 494.0,583.9 499.9,588.4 491.0,592.9" fill="#2aa2d4"/>
<polygon points="456.0,597.3 461.2,593.6 461.9,596.6 457.5,598.8" fill="#2aa2d4"/>
<polygon points="377.7,598.1 395.6,595.1 425.4,593.6 438.8,599.6 438.8,602.6 383.7,603.3" fill="#2aa2d4"/>
<polygon points="346.4,603.3 353.9,604.0 355.4,607.0" fill="#a9e3f6"/>
<polygon points="338.2,610.8 356.9,607.0 373.3,609.3 373.3,617.5 338.2,617.5" fill="#8fcf78"/>
<polygon points="373.3,606.3 410.5,601.1 438.8,600.3 440.3,606.3 461.2,610.8 440.3,615.2 459.7,616.7 459.7,619.7 373.3,619.7" fill="#cfd873"/>
<polygon points="461.2,605.5 467.1,603.3 486.5,604.0 486.5,607.8 476.1,610.0" fill="#cfd873"/>
<polygon points="358.4,607.8 401.6,609.3 401.6,611.5 358.4,610.8" fill="#000"/>
<polygon points="338.2,614.5 365.8,615.2 365.8,617.0 338.2,616.7" fill="#000"/>
<polygon points="404.6,616.7 459.7,617.5 459.7,619.0 404.6,618.5" fill="#000"/>
<polygon points="482.1,509.4 491.0,515.4 498.4,521.3 502.9,527.3 501.4,540.7 497.0,558.6 494.0,555.6 497.0,540.7 494.0,525.8 488.0,518.4" fill="#cfc79a"/>
<polygon points="498.4,515.4 508.0,513.9 508.0,521.3 499.9,520.6" fill="#8fcf78"/>
<polygon points="498.4,540.7 508.0,545.2 508.0,555.6 497.7,557.1" fill="#8fcf78"/>
<polygon points="499.9,555.6 508.0,554.1 508.0,573.5 499.9,566.0" fill="#a9e3f6"/>
<polygon points="486.5,597.3 491.0,595.1 493.2,598.8 488.0,600.3" fill="#8fcf78"/>
<polygon points="339.0,510.2 344.2,507.9 347.2,515.4 344.2,522.1 339.7,523.6" fill="#2aa2d4"/>
<polygon points="358.4,516.9 365.8,514.6 369.5,519.8 365.8,525.1 359.8,524.3" fill="#2aa2d4"/>
<polygon points="389.7,515.4 398.6,513.9 403.1,518.4 395.6,520.6" fill="#2aa2d4"/>
<polygon points="506.0,548.2 514.9,546.7 518.7,552.6 513.5,561.6 506.0,563.1" fill="#a9e3f6"/>
<polygon points="506.0,576.5 523.9,578.0 532.8,583.9 523.9,585.4 506.0,579.5" fill="#2aa2d4"/>
<polygon points="532.8,555.6 540.3,547.4 547.7,546.7 544.7,552.6 552.2,555.6 555.2,561.6 549.2,564.6 535.8,563.1 523.9,560.1" fill="#2aa2d4"/>
<polygon points="556.7,563.8 562.6,569.0 573.1,566.0 583.5,572.0 586.5,579.5 580.5,586.9 573.1,587.7 564.1,580.9 558.2,572.0" fill="#2aa2d4"/>
<polygon points="570.1,575.0 576.0,574.2 577.5,578.0 573.1,578.7" fill="#000"/>
<polygon points="595.4,536.2 607.3,536.2 616.3,549.7 604.4,545.2 597.7,540.7" fill="#2aa2d4"/>
<polygon points="590.9,553.4 605.9,552.3 611.8,557.8 601.4,555.6" fill="#2aa2d4"/>
<polygon points="632.7,559.3 649.1,553.4 668.4,551.1 667.7,558.6 652.1,563.1 640.1,561.6" fill="#2aa2d4"/>
<polygon points="588.0,507.9 599.9,507.2 603.6,511.6 598.4,515.4 593.9,511.6" fill="#2aa2d4"/>
<polygon points="667.0,586.2 678.0,578.7 678.0,586.9" fill="#2aa2d4"/>
<polygon points="590.9,595.1 597.7,586.9 605.9,595.1" fill="#2aa2d4"/>
<polygon points="532.1,531.0 539.5,521.3 539.5,533.3" fill="#a9e3f6"/>
<polygon points="542.5,528.0 556.7,531.0 555.9,533.3 543.3,531.0" fill="#2aa2d4"/>
<polygon points="611.1,521.3 616.3,522.1 623.7,529.5 631.2,528.0 632.7,540.7 629.7,545.2 620.0,544.4 616.3,534.7" fill="#cfd873"/>
<polygon points="619.3,545.2 629.7,545.2 625.2,548.9 620.0,548.2" fill="#a9e3f6"/>
<polygon points="655.0,515.4 669.9,504.9 671.4,506.4 656.5,516.9" fill="#2aa2d4"/>
<polygon points="665.5,524.3 671.4,504.9 672.6,505.2 667.3,525.1" fill="#2aa2d4"/>
<polygon points="650.6,529.5 656.5,533.3 661.0,532.5 660.2,534.0 655.0,535.0" fill="#2aa2d4"/>
<polygon points="588.0,597.3 640.1,595.6 640.1,596.7 588.0,598.8" fill="#8fcf78"/>
<polygon points="541.5,500.2 545.5,500.5 545.0,503.5 541.8,503.2" fill="#2aa2d4"/>
<polygon points="743.6,496.0 761.5,496.0 767.4,504.9 782.3,507.9 797.2,506.4 800.2,510.9 788.3,515.4 773.4,512.4 755.5,504.9" fill="#a9e3f6"/>
<polygon points="737.6,512.4 761.5,510.2 761.5,515.4 740.6,516.9" fill="#2aa2d4"/>
<polygon points="758.5,521.3 767.4,513.9 770.4,516.9 761.5,525.8 755.5,531.8 757.0,543.7 749.5,540.7 748.8,531.8" fill="#2aa2d4"/>
<polygon points="755.5,524.3 764.4,515.4 767.4,516.9 758.5,527.3 756.2,539.2 754.0,537.7" fill="#a9e3f6"/>
<polygon points="756.2,528.0 763.7,528.0 763.7,535.5 758.5,537.0" fill="#8fcf78"/>
<polygon points="758.5,540.7 764.4,541.5 763.7,545.9 758.5,545.2" fill="#8fcf78"/>
<polygon points="774.9,534.7 782.3,531.0 788.3,529.5 801.7,537.0 801.7,543.7 806.2,548.2 798.7,549.7 788.3,543.7 782.3,540.7" fill="#8fcf78"/>
<polygon points="797.2,522.1 801.7,522.8 806.2,528.0 804.7,528.8" fill="#cfd873"/>
<polygon points="680.2,527.3 689.9,531.0 701.8,535.5 719.7,543.7 736.1,551.1 755.5,546.7 755.5,552.6 745.1,557.1 734.6,554.9 718.2,545.9 700.4,537.7 680.2,530.3" fill="#2aa2d4"/>
<polygon points="810.6,541.5 815.9,540.0 814.4,545.9" fill="#2aa2d4"/>
<polygon points="833.0,551.9 837.5,549.7 847.9,555.6 847.9,570.5 843.4,569.0 836.0,566.0 838.2,558.6" fill="#a9e3f6"/>
<polygon points="816.6,579.5 827.0,577.2 847.9,569.0 847.9,573.5 833.0,580.9 817.3,583.2" fill="#2aa2d4"/>
<polygon points="678.0,579.5 682.5,576.5 688.4,586.9 678.0,588.4" fill="#2aa2d4"/>
<polygon points="707.8,586.9 727.2,583.9 746.6,575.7 742.1,586.9 748.0,590.6 710.8,591.4" fill="#2aa2d4"/>
<polygon points="758.5,585.7 770.4,585.4 771.1,587.7 759.2,587.7" fill="#2aa2d4"/>
<polygon points="776.4,572.8 784.6,574.2 784.1,575.3 776.7,573.8" fill="#2aa2d4"/>
<polygon points="678.0,593.6 707.8,592.6 737.6,591.4 737.6,592.9 692.9,595.9 678.0,600.3" fill="#cfd873"/>
<polygon points="821.1,610.8 828.5,607.8 847.9,607.0 847.9,616.7 827.0,616.0" fill="#8fcf78"/>
<polygon points="710.0,595.1 717.5,595.1 717.5,597.3 710.0,597.6" fill="#000"/>
<polygon points="755.5,594.4 760.7,594.4 760.7,596.1 755.5,596.1" fill="#000"/>
<polygon points="811.4,605.5 825.5,606.3 825.5,608.1 811.4,607.5" fill="#000"/>
</g>
<g fill="none" stroke="#8c8c8c" stroke-width="0.7">
<polyline points="571.6,455.4 583.5,446.5 596.9,445.0"/>
<polyline points="570.1,462.9 571.6,455.4"/>
<polyline points="583.5,458.4 589.5,470.3 595.4,479.3 589.5,485.2"/>
<polyline points="573.1,470.3 586.5,473.3 595.4,479.3 610.3,476.3 616.3,482.2"/>
<polyline points="596.9,456.9 608.8,461.4 616.3,470.3 616.3,482.2 610.3,491.2"/>
<polyline points="608.8,461.4 629.7,458.4 629.7,479.3 625.2,485.2 631.2,494.2"/>
<polyline points="629.7,468.8 644.6,470.3 655.0,479.3"/>
<polyline points="576.0,479.3 589.5,485.2 598.4,485.2 602.9,489.7"/>
<polyline points="616.3,482.2 629.7,479.3"/>
<polyline points="589.5,476.3 576.0,479.3 571.6,485.2"/>
<polyline points="692.9,440.5 707.8,445.0 713.8,455.4 728.7,457.7 742.1,453.9 740.6,446.5 727.2,442.0 707.8,445.0"/>
<polyline points="692.9,456.9 697.4,470.3 703.3,479.3"/>
<polyline points="727.2,458.4 731.7,470.3 737.6,480.8"/>
<polyline points="425.4,443.5 434.4,452.4 449.3,455.4 455.2,455.4"/>
<polyline points="431.4,452.4 440.3,464.4 449.3,468.8"/>
<polyline points="509.0,513.9 514.9,525.8 512.0,540.7"/>
<polyline points="514.9,525.8 523.9,522.8 529.8,510.9"/>
<polyline points="485.0,509.4 492.5,522.8 494.0,540.7 491.0,555.6"/>
</g>
<g filter="url(#spk)">
<polygon points="488.0,482.2 508.0,480.8 508.0,498.0 486.5,498.0" fill="#8fcf78"/>
<polygon points="506.0,482.2 512.0,483.7 512.0,498.0 506.0,498.0" fill="#8fcf78"/>
<polygon points="697.4,482.2 743.6,470.3 773.4,474.8 847.9,479.3 847.9,498.0 697.4,498.0" fill="#2aa2d4"/>
<polygon points="743.6,479.3 761.5,482.2 773.4,498.0 743.6,498.0" fill="#a9e3f6"/>
<polygon points="338.2,509.4 344.9,507.2 348.7,515.4 344.9,524.3 338.2,530.3" fill="#2aa2d4"/>
<polygon points="371.8,520.2 370.3,524.4 366.4,527.0 361.5,527.0 357.6,524.4 356.1,520.2 357.6,516.1 361.5,513.5 366.4,513.5 370.3,516.1" fill="#2aa2d4"/>
<polygon points="405.3,517.6 403.6,520.7 399.1,522.6 393.6,522.6 389.1,520.7 387.4,517.6 389.1,514.5 393.6,512.6 399.1,512.6 403.6,514.5" fill="#2aa2d4"/>
<polygon points="438.8,530.6 436.3,536.6 429.8,540.2 421.8,540.2 415.2,536.6 412.8,530.6 415.2,524.7 421.8,521.1 429.8,521.1 436.3,524.7" fill="#2aa2d4"/>
<polygon points="483.5,496.0 508.0,496.0 508.0,519.8 494.0,518.4" fill="#8fcf78"/>
<polygon points="506.0,496.0 540.3,496.0 544.7,509.4 535.8,522.8 522.4,545.2 510.5,545.2 506.0,533.3" fill="#8fcf78"/>
<polygon points="613.3,496.0 655.0,496.0 649.1,518.4 640.1,531.8 625.2,525.8 613.3,512.4" fill="#cfd873"/>
<polygon points="710.8,499.0 737.6,496.0 847.9,496.0 847.9,527.3 827.0,525.8 797.2,516.9 767.4,516.9 737.6,518.4 710.8,512.4" fill="#2aa2d4"/>
</g>
<rect x="338" y="621" width="510" height="4" fill="#c9b473"/>
</svg>
<!-- pan control -->
<svg class="abs" style="left:344px;top:303px" width="40" height="58" viewBox="344 303 40 58">
<rect x="355" y="305" width="18" height="54" rx="9" fill="#00008b"/>
<rect x="346" y="323" width="36" height="18" rx="9" fill="#00008b"/>
<path d="M364 308.500l5.500 10h-11zM364 355.500l5.500-10h-11zM349.500 332l10-5.500v11zM378.500 332l-10-5.500v11z" fill="#fff"/>
</svg>
<!-- zoom control -->
<svg class="abs" style="left:353px;top:362px" width="22" height="58" viewBox="353 362 22 58">
<rect x="355" y="364" width="18" height="54" rx="9" fill="#00008b"/>
<path d="M359 374h10M364 369v10M359 407.500h10" stroke="#fff" stroke-width="2.200"/>
<g fill="none" stroke="#fff" stroke-width="0.700"><circle cx="364" cy="391" r="8.300"/><ellipse cx="364" cy="391" rx="4" ry="8.300"/><ellipse cx="364" cy="391" rx="8.300" ry="3.500"/><path d="M364 382.700v16.600M355.700 391h16.600M357.500 385.500q6.500 3 13 0M357.500 396.500q6.500-3 13 0"/></g>
</svg>
<!-- grey nav icons -->
<svg class="abs" style="left:355px;top:427px" width="24" height="48" viewBox="0 0 24 48">
<defs><radialGradient id="gb" cx="0.350" cy="0.300" r="0.800"><stop offset="0" stop-color="#d8d8d8"/><stop offset="1" stop-color="#777"/></radialGradient></defs>
<circle cx="8" cy="8" r="6.500" fill="url(#gb)"/><path d="M11 12l8 8" stroke="#aaa" stroke-width="3"/><path d="M9 5h6V2.500l5.500 5-5.500 5V10H9z" fill="#8a8a8a"/>
<circle cx="8" cy="32" r="6.500" fill="url(#gb)"/><path d="M11 36l8 8" stroke="#aaa" stroke-width="3"/><path d="M14 37H8v-2.500l-5.500 5 5.500 5V42h6z" fill="#8a8a8a"/>
</svg>
<!-- loading popup -->
<div class="abs" style="left:597px;top:422px;width:96px;height:35px;background:#fff"></div>
<div class="abs t" style="left:602px;top:428px;font-size:12.250px;color:#000030">Loading...</div>
<div class="abs" style="left:672px;top:428px;width:15px;height:15px;background:radial-gradient(#ee6f88,#d40f38 80%)"></div>
<svg class="abs" style="left:672px;top:428px" width="15" height="15"><path d="M3.500 3.500l8 8M11.500 3.500l-8 8" stroke="#fff" stroke-width="1.900"/></svg>
<!-- tool buttons -->
<div class="abs" style="left:753px;top:303px;width:24px;height:22px;background:#e9e8e3;border:1px solid #b5b3a2;border-radius:3px"></div>
<svg class="abs" style="left:753px;top:303px" width="24" height="22"><path d="M3.800 12.800L9.200 4.800 19.900 9 17.800 16.800" fill="none" stroke="#222" stroke-width="0.500"/><g fill="#000"><rect x="2.800" y="11.800" width="2" height="2"/><rect x="8.200" y="3.800" width="2" height="2"/><rect x="18.900" y="8" width="2" height="2"/><rect x="16.800" y="15.800" width="2" height="2"/></g></svg>
<div class="abs" style="left:821px;top:303px;width:24px;height:22px;background:#f0b92f;border:1px solid #c8a860;border-radius:3px"></div>
<svg class="abs" style="left:821px;top:303px" width="24" height="22"><g transform="rotate(-14 12 11) translate(-0.800 -0.600) scale(1.080)"><path d="M9.500 17.500L5.500 11.500q-1-1.800 0.600-2.200 1 0 2.200 1.800L7.300 6q-0.200-1.600 1-1.700 1.100 0 1.500 1.500L10.300 4q0.300-1.400 1.500-1.300 1.100 0.100 1.200 1.600l0.300 1.200q0.300-1.300 1.400-1.100 1.100 0.200 1 1.700l0.200 2q0.400-1 1.300-0.800 0.900 0.300 0.700 1.700L16.500 14.500 15 18.500q-3 0.800-5.500-1z" fill="#f2f2ea" stroke="#333" stroke-width="0.800"/><path d="M10.300 6l0.800 4M13.300 5.500l0 4.500M15.900 8l-0.400 3" stroke="#333" stroke-width="0.600" fill="none"/></g></svg>
<!-- plus pill -->
<svg class="abs" style="left:830px;top:329px" width="20" height="20" viewBox="830 329 20 20"><rect x="832" y="330" width="30" height="18" rx="9" fill="#00008b"/><path d="M836.500 339h10M841.500 334v10" stroke="#fff" stroke-width="2.300"/></svg>
<!-- colour bar -->
<div class="abs" style="left:848px;top:297px;width:42px;height:400px;background:#000"></div>
<div class="abs" style="left:849px;top:298px;width:40px;height:398px;background:linear-gradient(#8b0000 0.0px 19.9px,#ac0000 19.9px 39.8px,#f50000 39.8px 59.7px,#ff2a00 59.7px 79.6px,#ff5f00 79.6px 99.5px,#ff9500 99.5px 119.4px,#ffca00 119.4px 139.3px,#ffff00 139.3px 159.2px,#caff35 159.2px 179.1px,#95ff6a 179.1px 199.0px,#6aff95 199.0px 218.9px,#35ffca 218.9px 238.8px,#00ffff 238.8px 258.7px,#00caff 258.7px 278.6px,#0095ff 278.6px 298.5px,#005fff 298.5px 318.4px,#002aff 318.4px 338.3px,#0000f5 338.3px 358.2px,#0000ac 358.2px 378.1px,#00008b 378.1px 398.0px)"></div>
<div class="abs" style="left:0;top:925px;width:1154px;height:1px;background:#dcdcdf"></div>
<div class="abs" style="left:0;top:926px;width:1154px;height:29px;background:#f9f9fa;border-bottom:1px solid #e0e0e2"></div>
<div class="abs" style="left:126px;top:926px;width:84px;height:2px;background:#0a84ff"></div>
<style>.dt{top:934px;font-size:12px;letter-spacing:-0.400px;color:#0c0c0d;white-space:nowrap;line-height:15px}</style>
<svg class="abs" style="left:8px;top:933px" width="18" height="16"><path d="M13.500 8V2.500h-12v10H8" fill="none" stroke="#3a3a3e" stroke-width="1.200"/><path d="M9 7.500l2 6.500 1.300-2.500 2.700 2.700 1-1-2.700-2.700 2.500-1z" fill="#fff" stroke="#3a3a3e" stroke-width="1"/></svg>
<div class="abs" style="left:32px;top:930px;width:1px;height:21px;background:#dcdcdf"></div>
<svg class="abs" style="left:43px;top:933px" width="16" height="14"><rect x="2.500" y="2.500" width="11" height="9" rx="1.500" fill="none" stroke="#2a2a2e" stroke-width="1.200"/><path d="M8 0.500v2M8 11.500v2M0.500 7h2M13.500 7h2" stroke="#2a2a2e" stroke-width="1.200"/></svg>
<div class="abs ui dt" style="left:64px">Inspector</div>
<svg class="abs" style="left:136px;top:933px" width="16" height="14"><rect x="1.500" y="1.500" width="13" height="11" rx="1" fill="none" stroke="#0a84ff" stroke-width="1.200"/><path d="M1.500 4h13" stroke="#0a84ff" stroke-width="1.200"/><path d="M4 6.500l2.500 2L4 10.500" fill="none" stroke="#0a84ff" stroke-width="1"/></svg>
<div class="abs ui dt" style="left:157px;color:#0a84ff">Console</div>
<svg class="abs" style="left:220px;top:934px" width="17" height="12"><path d="M1.500 2.500q0-1 1-1h9.500l3.500 4.500-3.500 4.500H2.500q-1 0-1-1z" fill="none" stroke="#2a2a2e" stroke-width="1.200"/></svg>
<div class="abs ui dt" style="left:241px">Debugger</div>
<div class="abs ui dt" style="left:317px;font-size:12px;letter-spacing:1.500px">{}</div>
<div class="abs ui dt" style="left:338px">Style Editor</div>
<svg class="abs" style="left:422px;top:933px" width="16" height="15"><circle cx="7.500" cy="7.500" r="6" fill="none" stroke="#2a2a2e" stroke-width="1.100" stroke-dasharray="30 8" transform="rotate(-20 7.500 7.500)"/><circle cx="7.500" cy="7.500" r="3" fill="none" stroke="#2a2a2e" stroke-width="1.100"/><path d="M7.500 7.500L12 3" stroke="#2a2a2e" stroke-width="1.100"/></svg>
<div class="abs ui dt" style="left:443px">Performance</div>
<svg class="abs" style="left:535px;top:933px" width="17" height="15"><rect x="5" y="2" width="7" height="11" rx="1.500" fill="none" stroke="#2a2a2e" stroke-width="1.200"/><path d="M1 4.500h3M1 7.500h3M1 10.500h3M13 4.500h3M13 7.500h3M13 10.500h3" stroke="#2a2a2e" stroke-width="1"/></svg>
<div class="abs ui dt" style="left:556px">Memory</div>
<svg class="abs" style="left:622px;top:934px" width="15" height="12"><path d="M1 2h13M3 6h8M1 10h5" stroke="#2a2a2e" stroke-width="1.200"/></svg>
<div class="abs ui dt" style="left:642px">Network</div>
<svg class="abs" style="left:711px;top:933px" width="14" height="15"><ellipse cx="7" cy="3.500" rx="5" ry="2" fill="none" stroke="#2a2a2e" stroke-width="1.100"/><path d="M2 3.500v8q0 2 5 2t5-2v-8M2 7.500q0 2 5 2t5-2" fill="none" stroke="#2a2a2e" stroke-width="1.100"/></svg>
<div class="abs ui dt" style="left:731px">Storage</div>
<!-- right icons -->
<svg class="abs" style="left:985px;top:932px" width="166" height="20" fill="none" stroke="#2a2a2e" stroke-width="1.100">
<rect x="1.500" y="3.500" width="13.500" height="12.500" rx="0.500"/><path d="M1.500 10.500h13.500M8.200 10.500v5.500"/><path d="M17 6.500h6.600l-3.300 3.600z" fill="#9b9b9f" stroke="none"/>
<rect x="29.500" y="3.500" width="13" height="12.500" rx="0.800"/><path d="M29.500 6.500h13M32.300 9l2.300 2-2.300 2"/>
<rect x="56.500" y="2.500" width="8.500" height="13.500" rx="1"/><circle cx="60.700" cy="12.500" r="1.100"/>
<circle cx="83.600" cy="8" r="2.300"/><path d="M82.400 1.500h2.400l.5 2 1.500.8 1.900-.8 1.300 2-1.400 1.500v1.900l1.400 1.500-1.300 2-1.900-.8-1.500.8-.5 2h-2.400l-.5-2-1.500-.8-1.900.8-1.300-2 1.400-1.500V7l-1.400-1.500 1.300-2 1.900.8 1.500-.8z"/>
<path d="M96.500 -3v21" stroke="#dcdcdf"/>
<rect x="101.500" y="3.500" width="11.500" height="10.500" rx="0.800"/><path d="M109.500 3.500v10.500"/>
<path d="M130.500 5.500v-3h8.500v5.500h-3"/><rect x="127.500" y="5.500" width="8.500" height="7.500"/>
<path d="M152.500 4.500l9.500 9.500M162 4.500l-9.500 9.500"/>
</svg>
<!-- filter bar -->
<div class="abs" style="left:0;top:955px;width:1154px;height:29px;background:#f9f9fa;border-bottom:1px solid #e0e0e2"></div>
<svg class="abs" style="left:9px;top:961px" width="14" height="16" fill="none" stroke="#2a2a2e" stroke-width="1.100"><path d="M1 3.500h12M5 3.500v-2h4v2M2.500 3.500v10q0 1 1 1h7q1 0 1-1v-10M5.500 6v6M8.500 6v6"/></svg>
<div class="abs" style="left:31px;top:959px;width:1px;height:21px;background:#dcdcdf"></div>
<svg class="abs" style="left:39px;top:962px" width="14" height="15" fill="none" stroke="#2a2a2e" stroke-width="1.100"><path d="M1 1.500h12l-4.500 6v6l-3-2v-4z"/></svg>
<div class="abs ui" style="left:63px;top:962px;font-size:14.500px;letter-spacing:-0.450px;color:#8d8d92;line-height:17px;white-space:nowrap">Filter output</div>
<div class="abs" style="left:1045px;top:961px;width:16px;height:16px;border:1px solid #a0a0a0;border-radius:3.500px;background:linear-gradient(#fff,#f4f4f4)"></div>
<div class="abs ui" style="left:1065px;top:962px;font-size:14.500px;letter-spacing:-0.280px;color:#38383d;line-height:17px;white-space:nowrap">Persist Logs</div>
<!-- rows -->
<div class="abs" style="left:0;top:984px;width:1154px;height:19px;background:#fffbd6;border-bottom:1px solid #f5efb8"></div>
<svg class="abs" style="left:17px;top:989px" width="10" height="10"><path d="M5 0.500L9.700 9.500H0.300z" fill="#f2a11c"/><path d="M5 3.500v3" stroke="#fff" stroke-width="1.300"/><circle cx="5" cy="8" r="0.800" fill="#fff"/></svg>
<div class="abs mono" style="left:31px;top:987px;color:#715100">window.controllers/Controllers is deprecated. Do not use it for UA detection.</div>
<div class="abs mono" style="right:11px;top:987px;color:#0a5bc4">OpenLayers-2.13.1.js:550:417</div>
<div class="abs" style="left:0;top:1003px;width:1154px;height:101px;background:#fdf2f5"></div>
<svg class="abs" style="left:17px;top:1008px" width="10" height="10"><path d="M5 0.500L9.700 9.500H0.300z" fill="#e8102a"/><path d="M5 3.500v3" stroke="#fff" stroke-width="1.300"/><circle cx="5" cy="8" r="0.800" fill="#fff"/></svg>
<svg class="abs" style="left:30px;top:1009px" width="9" height="6"><path d="M0.500 0.500h8L4.500 5.500z" fill="#9a9a9e"/></svg>
<div class="abs mono" style="left:45px;top:1006px;color:#a4000f">TypeError: OpenLayers.loadURL is not a function <a style="color:#0a5bc4">[Learn More]</a></div>
<div class="abs mono" style="right:11px;top:1006px;color:#0a5bc4">godiva2.js:508:9</div>
<div class="abs" style="left:45px;top:1023px;width:1099px;height:75px;border:1px solid #2a2a2e;border-radius:2px"></div>
<div class="abs mono" style="left:61px;top:1035px;color:#1a1a1e">getFeatureInfo<br>triggerEvent<br>handleBrowserEvent<br>bindAsEventListener/&lt;</div>
<div class="abs mono" style="right:26px;top:1035px;color:#0a5bc4;text-align:right">http://thredds.ucar.edu/thredds/godiva2/js/godiva2.js:508:9<br>http://thredds.ucar.edu/thredds/godiva2/js/OpenLayers-2.13.1.js:138:56<br>http://thredds.ucar.edu/thredds/godiva2/js/OpenLayers-2.13.1.js:138:440<br>http://thredds.ucar.edu/thredds/godiva2/js/OpenLayers-2.13.1.js:63:249</div>
<div class="abs" style="left:0;top:1154px;width:1154px;height:1px;background:#e0e0e2"></div>
<svg class="abs" style="left:5px;top:1159px" width="15" height="14"><path d="M1 1.500l6 5.500L1 12.500M6.500 1.500l6.500 5.500-6.500 5.500" fill="none" stroke="#b1b1b3" stroke-width="1.100"/></svg>
</body></html>
